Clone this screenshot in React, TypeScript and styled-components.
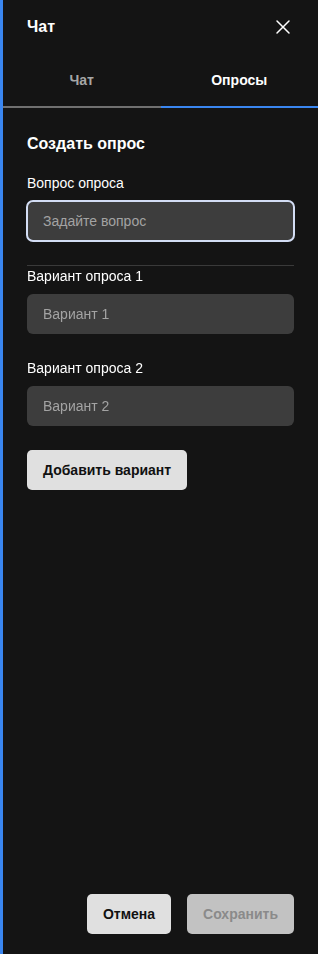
import React from "react";
import styled, { createGlobalStyle } from "styled-components";

const GlobalStyle = createGlobalStyle`
  html, body {
    margin: 0;
    padding: 0;
    background: #141414;
  }
  body {
    font-family: "Liberation Sans", Arial, sans-serif;
  }
  * {
    box-sizing: border-box;
  }
`;

const tabs = [
  { id: "chat", title: "Чат" },
  { id: "polls", title: "Опросы" },
];

const options = [
  { id: 1, label: "Вариант опроса 1", placeholder: "Вариант 1" },
  { id: 2, label: "Вариант опроса 2", placeholder: "Вариант 2" },
];

const App = () => {
  const [active, setActive] = React.useState("polls");

  return (
    <>
      <GlobalStyle />
      <Panel>
        <Header>
          <Title>Чат</Title>
          <CloseButton aria-label="Закрыть">
            <svg width="16" height="16" viewBox="0 0 16 16" fill="none">
              <path
                d="M2 2L14 14M14 2L2 14"
                stroke="#ffffff"
                strokeWidth="1.5"
                strokeLinecap="round"
              />
            </svg>
          </CloseButton>
        </Header>
        <Tabs>
          {tabs.map((tab) => (
            <Tab
              key={tab.id}
              $active={active === tab.id}
              onClick={() => setActive(tab.id)}
            >
              {tab.title}
            </Tab>
          ))}
        </Tabs>
        <Content>
          <Heading>Создать опрос</Heading>
          <Label>Вопрос опроса</Label>
          <Input placeholder="Задайте вопрос" $focused autoFocus />
          <Divider />
          {options.map((option) => (
            <Field key={option.id}>
              <Label>{option.label}</Label>
              <Input placeholder={option.placeholder} />
            </Field>
          ))}
          <AddButton>Добавить вариант</AddButton>
        </Content>
        <Footer>
          <Button>Отмена</Button>
          <Button $disabled>Сохранить</Button>
        </Footer>
      </Panel>
    </>
  );
};

export default App;

const Panel = styled.div`
  display: flex;
  flex-direction: column;
  height: 954px;
  width: 318px;
  background: #141414;
  border-left: 3px solid #3a86f0;
  color: #ffffff;
`;

const Header = styled.div`
  display: flex;
  align-items: center;
  justify-content: space-between;
  height: 54px;
  padding: 0 24px;
`;

const Title = styled.h2`
  margin: 0;
  font-size: 16px;
  font-weight: 700;
`;

const CloseButton = styled.button`
  display: flex;
  align-items: center;
  justify-content: center;
  padding: 0;
  margin-right: 3px;
  background: none;
  border: none;
  cursor: pointer;
`;

const Tabs = styled.div`
  display: flex;
  height: 54px;
`;

const Tab = styled.button<{ $active?: boolean }>`
  flex: 1;
  padding: 0;
  background: none;
  border: none;
  border-bottom: 2px solid ${(p) => (p.$active ? "#3a86f0" : "#707070")};
  color: ${(p) => (p.$active ? "#ffffff" : "#a6a6a6")};
  font-family: inherit;
  font-size: 14px;
  font-weight: 700;
  cursor: pointer;
`;

const Content = styled.div`
  display: flex;
  flex-direction: column;
  flex: 1;
  padding: 24px 24px 0;
`;

const Heading = styled.h3`
  margin: 0 0 17px;
  font-size: 16px;
  line-height: 24px;
  font-weight: 700;
`;

const Label = styled.label`
  display: block;
  margin-bottom: 8px;
  font-size: 14px;
  line-height: 20px;
`;

const Field = styled.div`
  display: flex;
  flex-direction: column;
  margin-bottom: 24px;
`;

const Input = styled.input<{ $focused?: boolean }>`
  width: 100%;
  height: 40px;
  padding: 0 16px;
  border: none;
  border-radius: 6px;
  background: #3d3d3d;
  color: #ffffff;
  font-family: inherit;
  font-size: 14px;
  outline: ${(p) => (p.$focused ? "2px solid #d3ddf4" : "none")};
  outline-offset: -1px;

  &::placeholder {
    color: #a3a3a3;
  }

  &:focus {
    outline: 2px solid #d3ddf4;
    outline-offset: -1px;
  }
`;

const Divider = styled.hr`
  margin: 24px 0 0;
  border: none;
  border-top: 1px solid #3a3a3a;
`;

const AddButton = styled.button`
  align-self: flex-start;
  height: 40px;
  padding: 0 16px;
  border: none;
  border-radius: 5px;
  background: #e0e0e0;
  color: #111111;
  font-family: inherit;
  font-size: 14px;
  font-weight: 700;
  cursor: pointer;
`;

const Footer = styled.div`
  display: flex;
  justify-content: flex-end;
  gap: 16px;
  padding: 0 24px 20px;
`;

const Button = styled.button<{ $disabled?: boolean }>`
  height: 40px;
  padding: 0 16px;
  border: none;
  border-radius: 5px;
  background: ${(p) => (p.$disabled ? "#c2c2c2" : "#e0e0e0")};
  color: ${(p) => (p.$disabled ? "#8a8a8a" : "#111111")};
  font-family: inherit;
  font-size: 14px;
  font-weight: 700;
  cursor: ${(p) => (p.$disabled ? "default" : "pointer")};
`;
